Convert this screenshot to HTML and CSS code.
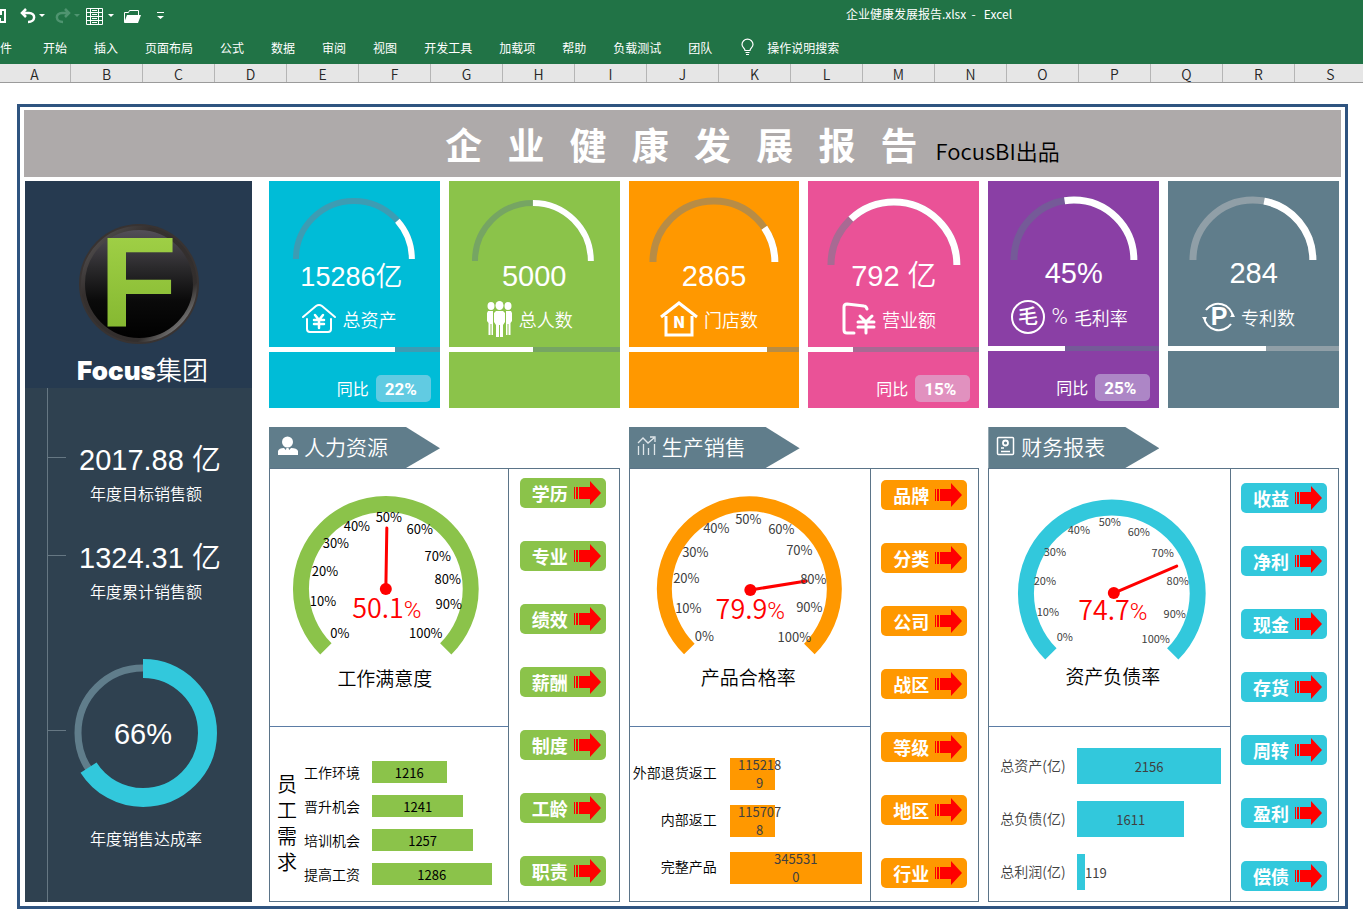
FILE: index.html
```html
<!DOCTYPE html>
<html lang="zh-CN">
<head>
<meta charset="utf-8">
<title>企业健康发展报告.xlsx - Excel</title>
<link rel="stylesheet" href="styles.css">
</head>
<body>
<svg class="defs" aria-hidden="true">
  <symbol id="arrow" viewBox="0 0 28 24">
    <path fill="#f00" d="M0 6h1v12H0zM2 6h2v12H2zM5 6h11V0l11 12-11 12v-6H5z"/>
  </symbol>
  <symbol id="caret" viewBox="0 0 6 4"><path fill="currentColor" d="M0 0h6L3 3z"/></symbol>
</svg>

<header class="app-bar">
  <div class="title-row">
    <div class="quick-access">
      <button class="tool" aria-label="保存"><svg width="16" height="16" viewBox="0 0 16 16"><path fill="none" stroke="#fff" stroke-width="2" d="M1 2h14v12H1z"/><path fill="#fff" d="M4 2h8v5H4zM5 10h6v4H5z"/></svg></button>
      <button class="tool tool-undo" aria-label="撤消"><svg width="16" height="16" viewBox="0 0 16 16"><path fill="none" stroke="#fff" stroke-width="2.500" d="M6 1L2 5l4 4M2 5h7c7 0 7 9-1 9"/></svg><svg class="caret" width="6" height="4"><use href="#caret"/></svg></button>
      <button class="tool tool-redo" aria-label="恢复"><svg width="16" height="16" viewBox="0 0 16 16"><path fill="none" stroke="currentColor" stroke-width="2.500" d="M10 1l4 4-4 4M14 5H7c-7 0-7 9 1 9"/></svg><svg class="caret" width="6" height="4"><use href="#caret"/></svg></button>
      <button class="tool tool-table" aria-label="表格"><svg width="17" height="17" viewBox="0 0 17 17"><path fill="none" stroke="#fff" d="M.5.5h16v16H.5zM4.500 0v17M12.500 0v17M0 4.500h17M0 8.500h17M0 12.500h17M6 2.500h5M6 6.500h5M6 10.500h5M6 14.500h5"/></svg><svg class="caret" width="6" height="4"><use href="#caret"/></svg></button>
      <button class="tool" aria-label="打开"><svg width="17" height="15" viewBox="0 0 17 15"><path fill="none" stroke="#fff" d="M.5 13V3.500h4l1-2h9V6"/><path fill="#fff" d="M3 6h14l-3 8H0z"/></svg></button>
      <button class="tool tool-more" aria-label="自定义快速访问工具栏"><svg width="7" height="8" viewBox="0 0 7 8"><path fill="#fff" d="M0 0h7v1H0zM0 4h7L3.500 7z"/></svg></button>
    </div>
    <div class="doc-title">企业健康发展报告.xlsx&nbsp; -&nbsp;&nbsp; Excel</div>
  </div>
  <nav class="ribbon">
    <button class="tab tab-file">件</button>
    <button class="tab">开始</button>
    <button class="tab">插入</button>
    <button class="tab">页面布局</button>
    <button class="tab">公式</button>
    <button class="tab">数据</button>
    <button class="tab">审阅</button>
    <button class="tab">视图</button>
    <button class="tab">开发工具</button>
    <button class="tab">加载项</button>
    <button class="tab">帮助</button>
    <button class="tab">负载测试</button>
    <button class="tab">团队</button>
    <button class="tab tell-me"><svg width="13" height="17" viewBox="0 0 13 17"><path fill="none" stroke="#fff" stroke-width="1.200" d="M4 11.500C4 9 1 8.500 1 5.500a5.200 5 0 0 1 11 0C12 8.500 9 9 9 11.500zM4.500 13.500h4M5 15.500h3"/></svg>操作说明搜索</button>
  </nav>
</header>

<div class="columns">
  <span>A</span><span>B</span><span>C</span><span>D</span><span>E</span><span>F</span><span>G</span><span>H</span><span>I</span><span>J</span><span>K</span><span>L</span><span>M</span><span>N</span><span>O</span><span>P</span><span>Q</span><span>R</span><span>S</span>
</div>

<main class="sheet">
<div class="frame">
  <div class="banner">
    <h1>企   业   健   康   发   展   报   告</h1>
    <span class="byline">FocusBI出品</span>
  </div>

  <div class="dashboard">
    <aside class="sidebar">
      <div class="brand">
        <svg width="124" height="124" viewBox="0 0 124 124" role="img" aria-label="Focus">
          <defs>
            <linearGradient id="disc" x1="0" y1="0" x2="0" y2="1"><stop offset="0" stop-color="#55505a"/><stop offset=".35" stop-color="#2b2a2c"/><stop offset=".65" stop-color="#0a0a0a"/><stop offset="1" stop-color="#000"/></linearGradient>
            <linearGradient id="rim" x1="0" y1="0" x2="1" y2="1"><stop offset="0" stop-color="#5d5b5c"/><stop offset=".3" stop-color="#35302f"/><stop offset=".75" stop-color="#322e2d"/><stop offset=".88" stop-color="#777"/><stop offset="1" stop-color="#3a3736"/></linearGradient>
            <linearGradient id="leaf" x1="0" y1="0" x2="0" y2="1"><stop offset="0" stop-color="#a6d64b"/><stop offset="1" stop-color="#7fb22c"/></linearGradient>
          </defs>
          <circle cx="62" cy="62" r="60" fill="#383332"/>
          <circle cx="62" cy="62" r="56" fill="url(#disc)" stroke="url(#rim)" stroke-width="4"/>
          <text class="logo-letter" x="22" y="104">F</text>
        </svg>
        <div class="brand-name"><b>Focus</b>集团</div>
      </div>
      <div class="timeline">
        <div class="stat">
          <div class="figure">2017.88 亿</div>
          <div class="caption">年度目标销售额</div>
        </div>
        <div class="stat">
          <div class="figure">1324.31 亿</div>
          <div class="caption">年度累计销售额</div>
        </div>
        <div class="stat stat-ring">
          <svg width="148" height="148" viewBox="0 0 148 148">
            <circle cx="74" cy="74" r="65" fill="none" stroke="#607d8b" stroke-width="7"/>
            <circle cx="74" cy="74" r="64.500" fill="none" stroke="#32c8dc" stroke-width="19" pathLength="100" stroke-dasharray="66 34" transform="rotate(-90 74 74)"/>
            <text class="ring-text" x="74" y="85">66%</text>
          </svg>
          <div class="caption">年度销售达成率</div>
        </div>
      </div>
    </aside>

    <div class="board">
      <section class="card cyan">
        <svg class="dial" viewBox="0 0 171 78"><path class="dial-track" stroke-width="6" d="M143 78A58 58 0 0 0 27 78"/><path class="dial-fill" stroke-width="6" pathLength="100" stroke-dasharray="23 100" d="M143 78A58 58 0 0 0 27 78"/></svg>
        <div class="value value-small">15286亿</div>
        <div class="label"><svg width="34" height="30" viewBox="0 0 34 30"><g fill="none" stroke="#fff" stroke-width="2" stroke-linecap="round"><path d="M1 13L14 2q3-2 6 0l13 11M5 15v10q0 3 3 3h18q3 0 3-3V15"/><path stroke-width="2.500" d="M13 11l4 5 4-5M12 16h10M12 20h10M17 16v8"/></g></svg>总资产</div>
        <div class="meter"><i style="width:74%"></i></div>
        <div class="yoy">同比 <b>22%</b></div>
      </section>
      <section class="card green">
        <svg class="dial" viewBox="0 0 171 78"><path class="dial-track" stroke-width="6" d="M142 80A58 58 0 0 0 26 80"/><path class="dial-fill" stroke-width="6" pathLength="100" stroke-dasharray="50 100" d="M142 80A58 58 0 0 0 26 80"/></svg>
        <div class="value">5000</div>
        <div class="label"><svg width="27" height="36" viewBox="0 0 27 36" fill="#fff"><ellipse cx="5" cy="5" rx="3.500" ry="4"/><ellipse cx="22" cy="5" rx="3.500" ry="4"/><path d="M2 10h5v24H5.500V23h-1v11H2.500V22L1 20v-8zM20 10h5l1 2v8l-1.500 2v12h-2V23h-1v11H20z"/><ellipse cx="13.500" cy="4.500" rx="4" ry="4.500"/><path d="M10 10h7l2 2v9l-2 3v12h-3V24h-1v12h-3V24l-2-3v-9z"/></svg>总人数</div>
        <div class="meter"><i style="width:49%"></i></div>
      </section>
      <section class="card orange">
        <svg class="dial" viewBox="0 0 171 78"><path class="dial-track" stroke-width="7" d="M146 81A61 61 0 0 0 24 81"/><path class="dial-fill" stroke-width="7" pathLength="100" stroke-dasharray="19 100" d="M146 81A61 61 0 0 0 24 81"/></svg>
        <div class="value">2865</div>
        <div class="label label-tall"><svg width="38" height="36" viewBox="0 0 38 36"><path fill="none" stroke="#fff" stroke-width="3" d="M1 16L19 2l18 14M6 15v19h26V15"/><text class="icon-letter" x="19" y="27" font-size="16">N</text></svg>门店数</div>
        <div class="meter"><i style="width:81%"></i></div>
      </section>
      <section class="card pink">
        <svg class="dial" viewBox="0 0 171 78"><path class="dial-track" stroke-width="7" d="M149 84A63 63 0 0 0 23 84"/><path class="dial-fill" stroke-width="7" pathLength="100" stroke-dasharray="74 100" d="M149 84A63 63 0 0 0 23 84"/></svg>
        <div class="value">792 亿</div>
        <div class="label"><svg width="34" height="33" viewBox="0 0 34 33"><g fill="none" stroke="#fff" stroke-width="3" stroke-linecap="round" stroke-linejoin="round"><path d="M12 31H5q-3 0-3-3V5q0-3 3-3l17 2q2 0 3 3"/><path d="M18 14l6 6 6-6M16 20h16M16 25h16M24 20v11"/></g></svg>营业额</div>
        <div class="meter"><i style="width:26%"></i></div>
        <div class="yoy">同比 <b>15%</b></div>
      </section>
      <section class="card purple raised">
        <svg class="dial" viewBox="0 0 171 75"><path class="dial-track" stroke-width="7" d="M146 79A60 60 0 0 0 26 79"/><path class="dial-fill" stroke-width="7" pathLength="100" stroke-dasharray="55 100" d="M146 79A60 60 0 0 0 26 79"/></svg>
        <div class="value">45%</div>
        <div class="label"><svg width="36" height="36" viewBox="0 0 36 36"><circle cx="18" cy="18" r="16" fill="none" stroke="#fff" stroke-width="2"/><text class="icon-glyph" x="18" y="25">毛</text></svg><span class="percent">%</span>毛利率</div>
        <div class="meter"><i style="width:45%"></i></div>
        <div class="yoy">同比 <b>25%</b></div>
      </section>
      <section class="card slate raised">
        <svg class="dial" viewBox="0 0 171 75"><path class="dial-track" stroke-width="7" d="M145 79A60 60 0 0 0 25 79"/><path class="dial-fill" stroke-width="7" pathLength="100" stroke-dasharray="44 100" d="M145 79A60 60 0 0 0 25 79"/></svg>
        <div class="value">284</div>
        <div class="label"><svg width="33" height="34" viewBox="0 0 33 34"><path fill="none" stroke="#fff" stroke-width="2" d="M4 10A15 15 0 0 1 31 17M29 24A15 15 0 0 1 2 17"/><path fill="#fff" d="M28 17h5l-2-4zM0 17h5l-2 4z"/><text class="icon-letter icon-p" x="17" y="25">P</text></svg>专利数</div>
        <div class="meter"><i style="width:57%"></i></div>
      </section>

      <section class="panel green">
        <h2 class="tag"><svg width="22" height="20" viewBox="0 0 22 20" fill="#fff"><circle cx="10.500" cy="6" r="5.500"/><path d="M1 19v-4q1-3 6-3l3.500 4 3.500-4q6 0 7 3v4zM9.500 12h2l1 3-2 2-2-2z"/></svg>人力资源</h2>
        <div class="box box-hr">
          <div class="charts">
            <svg class="gauge" viewBox="0 0 238 257">
              <path class="gauge-arc" stroke-width="16" d="M56 180A85 85 0 1 1 176 180"/>
              <g class="ticks ticks-dark"><text x="70" y="169">0%</text><text x="53" y="137">10%</text><text x="55" y="107">20%</text><text x="66" y="79">30%</text><text x="87" y="62">40%</text><text x="119" y="53">50%</text><text x="150" y="65">60%</text><text x="168" y="92">70%</text><text x="178" y="115">80%</text><text x="179" y="140">90%</text><text x="156" y="169">100%</text></g>
              <path class="needle" d="M116 120L117 59"/><circle cx="116" cy="120" r="6" fill="#f00"/>
              <text class="reading" x="117" y="149">50.1<tspan>%</tspan></text>
              <text class="gauge-caption" x="115" y="217">工作满意度</text>
            </svg>
            <div class="bars bars-hr">
              <div class="bars-title">员工需求</div>
              <div class="bar-name">工作环境</div><div class="bar" style="width:53%">1216</div>
              <div class="bar-name">晋升机会</div><div class="bar" style="width:65%">1241</div>
              <div class="bar-name">培训机会</div><div class="bar" style="width:72%">1257</div>
              <div class="bar-name">提高工资</div><div class="bar" style="width:85%">1286</div>
            </div>
          </div>
          <div class="links">
            <button>学历<svg><use href="#arrow"/></svg></button>
            <button>专业<svg><use href="#arrow"/></svg></button>
            <button>绩效<svg><use href="#arrow"/></svg></button>
            <button>薪酬<svg><use href="#arrow"/></svg></button>
            <button>制度<svg><use href="#arrow"/></svg></button>
            <button>工龄<svg><use href="#arrow"/></svg></button>
            <button>职责<svg><use href="#arrow"/></svg></button>
          </div>
        </div>
      </section>

      <section class="panel orange">
        <h2 class="tag"><svg width="20" height="20" viewBox="0 0 20 20"><path fill="none" stroke="#dfe6ea" stroke-width="1.300" d="M1.500 10v9M6.500 8v11M11.500 12v7M17.500 8v11M1 7l5-5 5 5 6-5M13 1h5v5"/></svg>生产销售</h2>
        <div class="box box-sales">
          <div class="charts">
            <svg class="gauge" viewBox="0 0 240 257">
              <path class="gauge-arc" stroke-width="15" d="M59 180A85 85 0 1 1 179 180"/>
              <path class="needle" d="M120 121L176 112"/><circle cx="120" cy="121" r="6" fill="#f00"/>
              <g class="ticks"><text x="74" y="172">0%</text><text x="58" y="144">10%</text><text x="56" y="114">20%</text><text x="65" y="88">30%</text><text x="86" y="64">40%</text><text x="118" y="55">50%</text><text x="151" y="65">60%</text><text x="169" y="86">70%</text><text x="183" y="115">80%</text><text x="179" y="143">90%</text><text x="164" y="173">100%</text></g>
              <text class="reading" x="120" y="150">79.9<tspan>%</tspan></text>
              <text class="gauge-caption" x="118" y="216">产品合格率</text>
            </svg>
            <div class="bars bars-sales">
              <div class="bar-name">外部退货返工</div><div class="bar bar-short" style="width:32%"><span>1152189</span></div>
              <div class="bar-name">内部返工</div><div class="bar bar-short" style="width:32%"><span>1157078</span></div>
              <div class="bar-name">完整产品</div><div class="bar" style="width:94%"><span>3455310</span></div>
            </div>
          </div>
          <div class="links">
            <button>品牌<svg><use href="#arrow"/></svg></button>
            <button>分类<svg><use href="#arrow"/></svg></button>
            <button>公司<svg><use href="#arrow"/></svg></button>
            <button>战区<svg><use href="#arrow"/></svg></button>
            <button>等级<svg><use href="#arrow"/></svg></button>
            <button>地区<svg><use href="#arrow"/></svg></button>
            <button>行业<svg><use href="#arrow"/></svg></button>
          </div>
        </div>
      </section>

      <section class="panel teal">
        <h2 class="tag"><svg width="20" height="20" viewBox="0 0 20 20" fill="none" stroke="#fff"><rect x="1.500" y="1.500" width="16" height="17" rx="1" stroke-width="1.500"/><circle cx="9.500" cy="7" r="2.500" stroke-width="1.800"/><path stroke-width="1.500" d="M5 12h3M5 15.500h9"/></svg>财务报表</h2>
        <div class="box box-finance">
          <div class="charts">
            <svg class="gauge" viewBox="0 0 241 257">
              <path class="gauge-arc" stroke-width="16" d="M62 185A86 86 0 1 1 184 185"/>
              <g class="ticks ticks-small"><text x="76" y="172">0%</text><text x="59" y="147">10%</text><text x="56" y="116">20%</text><text x="66" y="87">30%</text><text x="90" y="65">40%</text><text x="121" y="57">50%</text><text x="150" y="67">60%</text><text x="174" y="88">70%</text><text x="189" y="116">80%</text><text x="186" y="149">90%</text><text x="167" y="174">100%</text></g>
              <path class="needle" d="M125 124L188 97"/><circle cx="125" cy="124" r="6" fill="#f00"/>
              <text class="reading" x="124" y="151">74.7<tspan>%</tspan></text>
              <text class="gauge-caption" x="124" y="215">资产负债率</text>
            </svg>
            <div class="bars bars-finance">
              <div class="bar-name">总资产(亿)</div><div class="bar" style="width:94%">2156</div>
              <div class="bar-name">总负债(亿)</div><div class="bar" style="width:70%">1611</div>
              <div class="bar-name">总利润(亿)</div><div class="bar-outside"><div class="bar" style="width:5%"></div>119</div>
            </div>
          </div>
          <div class="links">
            <button>收益<svg><use href="#arrow"/></svg></button>
            <button>净利<svg><use href="#arrow"/></svg></button>
            <button>现金<svg><use href="#arrow"/></svg></button>
            <button>存货<svg><use href="#arrow"/></svg></button>
            <button>周转<svg><use href="#arrow"/></svg></button>
            <button>盈利<svg><use href="#arrow"/></svg></button>
            <button>偿债<svg><use href="#arrow"/></svg></button>
          </div>
        </div>
      </section>
    </div>
  </div>
</div>
</main>
</body>
</html>
```
FILE: styles.css
```css
* { box-sizing: border-box; }

body {
  margin: 0;
  background: #fff;
  color: #000;
  font-family: "Noto Sans CJK SC", sans-serif;
  overflow-x: hidden;
}

button {
  margin: 0;
  padding: 0;
  border: 0;
  background: none;
  color: inherit;
  font: inherit;
  white-space: nowrap;
}

h1, h2 { margin: 0; font-weight: inherit; }
svg { display: block; flex: none; overflow: visible; }
.defs { display: none; }

/* Application chrome */
.app-bar { background: #217346; color: #fff; font-size: 12px; overflow: hidden; }
.title-row { display: flex; height: 32px; align-items: center; }
.quick-access { display: flex; align-items: center; width: 495px; margin-left: -10px; }
.doc-title { flex: 1; margin-left: 10px; text-align: center; line-height: 28px; align-self: flex-start; }
.tool { display: flex; align-items: center; gap: 3px; margin-right: 10px; }
.tool-undo { margin-left: 4px; }
.tool-redo { color: #4f9470; }
.tool-table { gap: 5px; margin-left: -4px; }
.tool-more { margin-left: 6px; }
.ribbon { display: flex; gap: 27px; height: 32px; padding-bottom: 2px; align-items: center; }
.tab-file { margin-right: 4px; }
.tell-me { display: flex; align-items: center; gap: 13px; margin-left: 2px; }

.columns {
  display: flex;
  height: 19px;
  margin-left: -1px;
  overflow: hidden;
  background: #e6e6e6;
  border-bottom: 1px solid #9b9b9b;
  color: #262626;
  font-size: 14px;
  font-weight: 350;
  line-height: 20px;
}
.columns span { flex: none; width: 72px; text-align: center; border-right: 1px solid #b5b5b5; }

/* Sheet frame and banner */
.sheet { padding: 21px 15px 7px 17px; }
.frame { border: 3px solid #2f5480; padding: 3px 4px 4px; }
.banner {
  display: flex;
  align-items: baseline;
  justify-content: center;
  gap: 18px;
  height: 67px;
  padding-left: 140px;
  background: #aeaaaa;
}
.banner h1 { color: #fff; font-size: 37px; font-weight: 700; line-height: 68px; white-space: pre; }
.byline { font-size: 22px; font-weight: 350; }

.dashboard { display: grid; grid-template-columns: 227px 1fr; gap: 17px; padding: 4px 2px 0 1px; }

/* Sidebar */
.sidebar { display: flex; flex-direction: column; color: #fff; background: #2f4150; }
.brand {
  display: flex;
  flex-direction: column;
  align-items: center;
  gap: 7px;
  height: 207px;
  padding-top: 41px;
  background: #263a50;
}
.logo-letter { font: 700 128px "Liberation Sans", sans-serif; fill: url(#leaf); }
.brand-name { padding-left: 8px; font-size: 26px; font-weight: 350; line-height: 32px; }
.brand-name b { font-family: Inter, sans-serif; font-weight: 900; }
.timeline {
  flex: 1;
  margin-left: 22px;
  padding-top: 54px;
  border-left: 1px solid #667783;
  text-align: center;
}
.stat { position: relative; height: 98px; }
.stat::before {
  content: "";
  position: absolute;
  left: 0;
  top: 15px;
  width: 18px;
  border-top: 1px solid #667783;
}
.figure { font: 29px/36px "Liberation Sans", "Noto Sans CJK SC", sans-serif; font-weight: 350; }
.caption { padding-right: 8px; font-size: 16px; font-weight: 350; line-height: 30px; }
.stat-ring {
  display: flex;
  flex-direction: column;
  align-items: center;
  gap: 16px;
  height: auto;
  padding: 21px 14px 0 0;
}
.stat-ring::before { top: 92px; }
.stat-ring .caption { padding: 0 0 0 6px; }
.ring-text { font: 29px "Liberation Sans", sans-serif; fill: #fff; text-anchor: middle; }

/* Board grid */
.board { display: grid; grid-template-columns: repeat(6, 1fr); gap: 19px 9px; align-content: start; }

.card {
  display: grid;
  grid-template-rows: 78px 34px 1fr 5px 56px;
  height: 227px;
  color: #fff;
  background: var(--tone);
}
.card.raised { grid-template-rows: 75px 34px 1fr 5px 57px; }
.cyan { --tone: #00bcd7; --track: #3d9cb3; }
.green { --tone: #8bc34a; --track: #76a563; }
.orange { --tone: #ff9800; --track: #b88c45; }
.pink { --tone: #ea5297; --track: #a86a93; }
.purple { --tone: #8a3fa5; --track: #755a98; }
.slate { --tone: #607d8b; --track: #909fa7; }
.teal { --tone: #32c8dc; }

.dial { width: 100%; height: 100%; fill: none; }
.dial-track { stroke: var(--track); }
.dial-fill { stroke: #fff; }
.value { text-align: center; font: 29px/34px "Liberation Sans", "Noto Sans CJK SC", sans-serif; font-weight: 350; }
.value-small { padding-right: 6px; font-size: 27px; line-height: 36px; }
.label {
  display: flex;
  align-items: center;
  justify-content: center;
  gap: 6px;
  padding: 0 10px 3px 0;
  font-size: 18px;
  font-weight: 350;
}
.icon-letter { font-family: "Noto Sans CJK SC", sans-serif; font-weight: 900; fill: #fff; text-anchor: middle; }
.icon-p { font: 700 25px "Liberation Sans", sans-serif; }
.icon-glyph { font-size: 20px; font-weight: 500; fill: #fff; text-anchor: middle; }
.percent { font: 300 22px/30px Roboto, sans-serif; }
.meter { background: var(--track); }
.meter i { display: block; height: 100%; background: #fff; }
.yoy {
  display: flex;
  justify-content: flex-end;
  align-items: center;
  gap: 7px;
  height: 50px;
  padding: 22px 9px 0 0;
  font-size: 16px;
}
.yoy b {
  width: 55px;
  height: 27px;
  padding-left: 9px;
  border-radius: 5px;
  background: rgba(214, 222, 240, .45);
  font: 700 17px/28px Roboto, sans-serif;
}

/* Panels */
.panel { grid-column: span 2; }
.tag {
  display: flex;
  align-items: center;
  gap: 5px;
  width: 171px;
  height: 41px;
  padding: 0 0 4px 8px;
  background: #607d8b;
  clip-path: polygon(0 0, 137px 0, 100% 52%, 137px 100%, 0 100%);
  color: #fff;
  font-size: 21px;
  font-weight: 350;
}
.box { display: grid; grid-template-columns: 1fr 111px; border: 1px solid #5b7488; }
.box-sales { grid-template-columns: 1fr 108px; }
.box-finance { grid-template-columns: 1fr 108px; }
.gauge { width: 100%; height: 257px; }
.gauge-arc { fill: none; stroke: var(--tone); }
.needle { fill: none; stroke: #f00; stroke-width: 3; stroke-linecap: round; }
.ticks { font-size: 13px; fill: #404040; text-anchor: middle; }
.ticks-dark { fill: #000; }
.ticks-small { font-size: 11px; }
.reading { font-size: 27px; font-weight: 350; fill: #f00; text-anchor: middle; }
.reading tspan { font-family: Roboto, sans-serif; font-size: 24px; font-weight: 300; }
.gauge-caption { font-size: 19px; font-weight: 350; text-anchor: middle; }

.bars {
  display: grid;
  align-content: start;
  align-items: center;
  height: 175px;
  border-top: 1px solid #5b7ca5;
  font-size: 14px;
  font-weight: 350;
}
.bar-name { white-space: nowrap; }
.bar {
  display: flex;
  align-items: center;
  justify-content: center;
  height: 100%;
  background: var(--tone);
  font-size: 13px;
  font-weight: 400;
}
.bars-hr {
  grid-template-columns: 20px 56px 1fr;
  grid-auto-rows: 22px;
  gap: 12px;
  column-gap: 7px;
  padding: 34px 0 0 7px;
}
.bars-hr .bar { margin-left: 5px; }
.bars-title { grid-row: 1 / span 4; width: 20px; font-size: 20px; line-height: 26px; }
.bars-sales {
  grid-template-columns: 84px 1fr;
  grid-auto-rows: 32px;
  row-gap: 15px;
  column-gap: 13px;
  padding: 31px 0 0 3px;
}
.bars-sales .bar-name { text-align: right; line-height: 28px; padding-bottom: 4px; }
.bars-sales .bar { color: #404040; line-height: 18px; text-align: center; }
.bars-sales .bar span { flex: none; width: 46px; word-break: break-all; }
.bars-sales .bar-short { justify-content: flex-start; padding-left: 7px; }
.bars-finance {
  grid-template-columns: 66px 1fr;
  grid-auto-rows: 36px;
  row-gap: 17px;
  column-gap: 11px;
  padding: 21px 0 0 11px;
  color: #404040;
}
.bars-finance .bar-name { padding-bottom: 3px; }
.bar-outside { display: flex; align-items: center; height: 100%; font-size: 13px; font-weight: 400; }

.links {
  display: flex;
  flex-direction: column;
  align-items: flex-start;
  gap: 33px;
  padding: 9px 0 0 11px;
  border-left: 1px solid #5b7488;
}
.box-sales .links { padding-top: 11px; padding-left: 10px; }
.box-finance .links { padding-top: 14px; padding-left: 10px; }
.links button {
  display: flex;
  align-items: center;
  gap: 6px;
  width: 86px;
  height: 30px;
  padding-left: 12px;
  border-radius: 5px;
  background: var(--tone);
  color: #fff;
  font-size: 18px;
  font-weight: 700;
}
.links svg { width: 28px; height: 24px; }
```
